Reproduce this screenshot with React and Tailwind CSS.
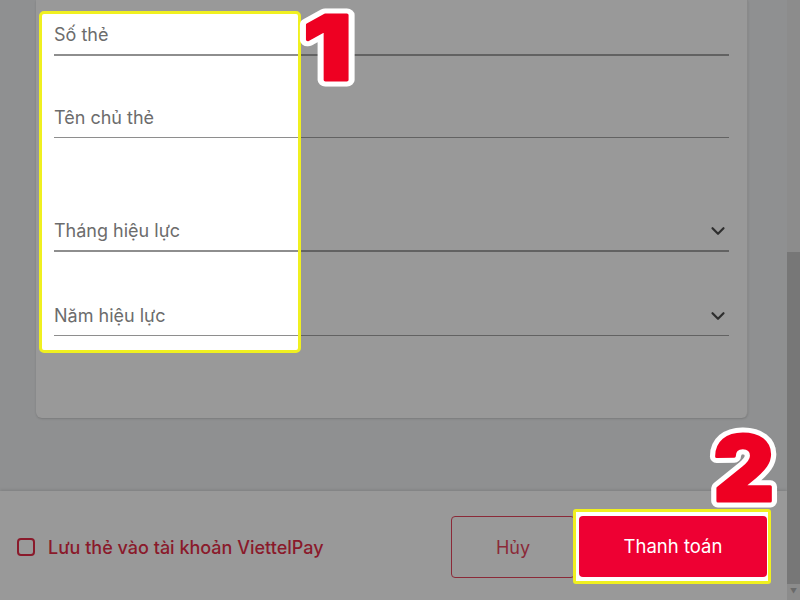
import React from "react";
import { ChevronDown } from "lucide-react";

const fields = [
  { label: "Số thẻ", pt: "pt-[23px]", line: "border-b-2" },
  { label: "Tên chủ thẻ", pt: "pt-[50px]", line: "border-b" },
  { label: "Tháng hiệu lực", pt: "pt-[81px]", line: "border-b-2", select: true },
  { label: "Năm hiệu lực", pt: "pt-[52px]", line: "border-b", select: true },
];

// the form, drawn once dimmed and once bright inside the highlight
function Fields({ bright }) {
  return (
    <div className="px-[18px]">
      {fields.map((f) => (
        <div
          key={f.label}
          className={`${f.pt} pb-[7px] ${f.line} flex items-center justify-between ${
            bright ? "border-[#8e8e8e]" : "border-[#626262]"
          }`}
        >
          <span className={`text-[18px] leading-6 ${bright ? "text-[#6c6c6c]" : "text-[#424242]"}`}>{f.label}</span>
          {f.select && <ChevronDown size={22} strokeWidth={2.4} className="text-[#2e2e2e]" />}
        </div>
      ))}
    </div>
  );
}

// big red step number with white outline
function Badge({ n, className, sx = 1 }) {
  return (
    <svg width="110" height="100" viewBox="0 0 110 100" overflow="visible" className={`absolute ${className}`}>
      <g transform={`scale(${sx} 1)`} fontFamily="Inter, Roboto, sans-serif" fontWeight="900" fontSize="90">
        <text x="10" y="80" fill="#fff" stroke="#fff" strokeWidth="13" strokeLinejoin="round">{n}</text>
        <text x="10" y="80" fill="#ee0022" stroke="#ee0022" strokeWidth="3" strokeLinejoin="round">{n}</text>
      </g>
    </svg>
  );
}

export default function App() {
  return (
    <div className="relative flex w-[800px] h-[600px] overflow-hidden bg-[#8f9091] font-[family-name:Inter,'Noto_Sans',sans-serif]">
      <div className="flex flex-col w-[787px]">
        <div className="h-[491px] pl-[36px]">
          <div className="relative w-[712px] h-[418px] bg-[#999999] rounded-b-md shadow-[0_1px_2px_rgba(0,0,0,0.15)] border-r border-[#8a8a8a]">
            <Fields />
            <div className="absolute left-[3px] top-[11px] w-[262px] h-[342px] rounded-[5px] border-[3px] border-[#f0f020] bg-white overflow-hidden">
              <div className="absolute left-[-6px] top-[-14px] w-[712px]">
                <Fields bright />
              </div>
            </div>
          </div>
        </div>
        <div className="h-[109px] bg-[#999999] shadow-[0_-1px_3px_rgba(0,0,0,0.12)] flex items-center justify-between pt-[3px] pl-[17px] pr-[20px]">
          <label className="flex items-center gap-[13px]">
            <span className="w-[18px] h-[18px] rounded-[4px] border-2 border-[#8a1a2b]" />
            <span className="text-[18px] font-medium text-[#8a1a2b]">Lưu thẻ vào tài khoản ViettelPay</span>
          </label>
          <div className="relative flex gap-[4px]">
            <button className="w-[124px] h-[62px] rounded-[4px] border border-[#8b2a38] text-[18px] text-[#8b2a38]">Hủy</button>
            <div className="absolute left-[122px] top-[-7px] w-[198px] h-[75px] rounded-[3px] border-[3px] border-[#f0f020] bg-white" />
            <button className="relative w-[188px] h-[61px] rounded-[4px] bg-[#ee0033] text-[18.5px] text-white">Thanh toán</button>
          </div>
        </div>
      </div>
      <div className="w-[13px] bg-[#8c8c8c] flex flex-col">
        <div className="h-[252px]" />
        <div className="h-[332px] bg-[#777777]" />
        <div className="flex-1 flex items-center justify-center text-[#6a6a6a] text-[7px]">▼</div>
      </div>
      <Badge n="1" sx={1.2} className="left-[291px] top-0" />
      <Badge n="2" sx={1.04} className="left-[703px] top-[421px]" />
    </div>
  );
}
